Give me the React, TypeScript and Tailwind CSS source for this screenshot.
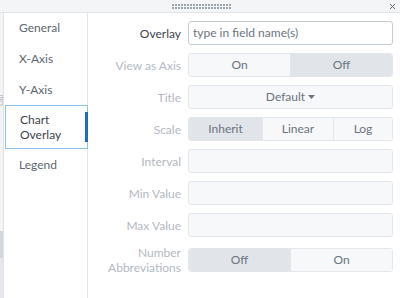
import { X } from "lucide-react";

const labelCls = "w-[93px] shrink-0 text-right text-[12px] leading-[15px] text-[#b3b9c1]";

function Row({ label, dark, children }: { label: React.ReactNode; dark?: boolean; children: React.ReactNode }) {
  return (
    <div className="flex items-center gap-[7px] min-h-[24px]">
      <div className={labelCls + (dark ? " !text-[#3c444d]" : "")}>{label}</div>
      <div className="w-[205px] shrink-0">{children}</div>
    </div>
  );
}

function Group({ items }: { items: { text: string; on?: boolean; w?: string }[] }) {
  return (
    <div className="flex h-[24px] rounded-[3px] border border-[#e3e7ec] overflow-hidden">
      {items.map((it, i) => (
        <div
          key={i}
          className={
            "flex items-center justify-center text-[12px] text-[#6b7480] " +
            (it.w ?? "flex-1") +
            (i > 0 ? " border-l border-[#e3e7ec]" : "") +
            (it.on ? " bg-[#e1e5ea]" : " bg-[#f7f8fa]")
          }
        >
          {it.text}
        </div>
      ))}
    </div>
  );
}

const emptyBox = <div className="h-[24px] rounded-[3px] border border-[#e3e7ec] bg-[#f7f8fa]" />;

export default function App() {
  const navItems = ["General", "X-Axis", "Y-Axis"];
  return (
    <div className="w-[400px] h-[298px] overflow-hidden flex flex-col bg-white font-['Lato',sans-serif]">
      {/* Title bar */}
      <div className="relative h-[13px] shrink-0 bg-[#f4f5f7] border-b border-[#e2e4e8]">
        <div className="absolute left-[172px] top-[4px] flex flex-col gap-[1px]">
          {[0, 1].map((r) => (
            <div key={r} className="flex gap-[1px]">
              {Array.from({ length: 20 }).map((_, i) => (
                <span key={i} className="w-[2px] h-[2px] bg-[#9ea4ac]" />
              ))}
            </div>
          ))}
        </div>
        <X className="absolute right-[3px] top-[2px] w-[9px] h-[9px] text-[#555c66]" strokeWidth={2.5} />
      </div>

      <div className="flex flex-1 min-h-0">
        {/* Left edge strip */}
        <div className="w-[4px] shrink-0 flex flex-col border-r border-[#dfe2e6] overflow-hidden">
          <div className="h-[80px] bg-[#f3f4f5]" />
          <div className="h-[22px] bg-[#f3f4f5] relative">
            <span className="absolute -left-[2px] top-[2px] text-[6px] leading-[6px] text-[#9aa0a8] [writing-mode:vertical-rl] rotate-180">Cou</span>
          </div>
          <div className="h-[116px] bg-[#f3f4f5]" />
          <div className="h-[27px] bg-[#d3d7dc]" />
          <div className="flex-1 bg-[#e6e8eb]" />
        </div>

        {/* Sidebar */}
        <div className="w-[84px] shrink-0 border-r border-[#e2e4e8] flex flex-col">
          {navItems.map((n) => (
            <div key={n} className="px-[15px] py-[8px] first:pt-[7px] text-[12px] leading-[15px] text-[#5c6670]">
              {n}
            </div>
          ))}
          <div className="relative mx-[1px] -mr-[1px] px-[14px] py-[6px] border border-[#8cc4ef] text-[12px] leading-[15px] text-[#3c444d]">
            Chart
            <br />
            Overlay
            <span className="absolute right-[-1px] top-[6px] w-[3px] h-[30px] bg-[#1a6fc2]" />
          </div>
          <div className="px-[15px] py-[8px] text-[12px] leading-[15px] text-[#5c6670]">Legend</div>
        </div>

        {/* Content */}
        <div className="flex-1 flex flex-col gap-[8px] pt-[8px]">
          <Row label="Overlay" dark>
            <div className="h-[24px] rounded-[3px] border border-[#c3cbd4] bg-white flex items-center px-[4px] text-[12px] text-[#6b7480]">
              type in field name(s)
            </div>
          </Row>
          <Row label="View as Axis">
            <Group items={[{ text: "On" }, { text: "Off", on: true }]} />
          </Row>
          <Row label="Title">
            <div className="h-[24px] rounded-[3px] border border-[#e3e7ec] bg-[#f7f8fa] flex items-center justify-center gap-[3px] text-[12px] text-[#6b7480]">
              Default
              <svg width="7" height="4" viewBox="0 0 7 4">
                <path d="M0 0h7L3.5 4z" fill="#6b7480" />
              </svg>
            </div>
          </Row>
          <Row label="Scale">
            <Group
              items={[
                { text: "Inherit", on: true, w: "w-[73px]" },
                { text: "Linear", w: "w-[71px]" },
                { text: "Log" },
              ]}
            />
          </Row>
          <Row label="Interval">{emptyBox}</Row>
          <Row label="Min Value">{emptyBox}</Row>
          <Row label="Max Value">{emptyBox}</Row>
          <Row
            label={
              <>
                Number
                <br />
                Abbreviations
              </>
            }
          >
            <Group items={[{ text: "Off", on: true }, { text: "On" }]} />
          </Row>
        </div>
      </div>
    </div>
  );
}
